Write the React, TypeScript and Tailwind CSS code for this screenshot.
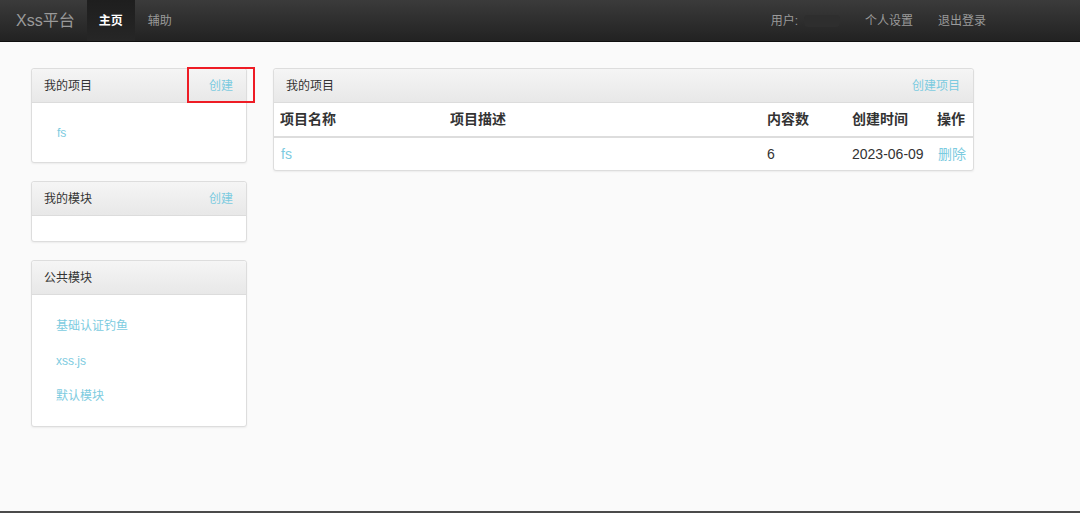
import React from "react";

const font = { fontFamily: '"Liberation Sans", "Noto Sans CJK SC", sans-serif' };

const projects = [{ name: "fs", desc: "", count: 6, date: "2023-06-09" }];
const publicModules = ["基础认证钓鱼", "xss.js", "默认模块"];

function PanelHead({ title, action }: { title: string; action?: string }) {
  return (
    <div className="flex h-[34px] items-center justify-between rounded-t-[3px] border-b border-[#dcdcdc] bg-gradient-to-b from-[#f5f5f5] to-[#e8e8e8] pl-[12px] pr-[13px] text-[12px] text-[#333]">
      <span>{title}</span>
      {action && <a className="text-[12px] text-[#7ccbe0]">{action}</a>}
    </div>
  );
}

export default function App() {
  return (
    <div style={font} className="flex h-[513px] w-[1080px] flex-col overflow-hidden bg-[#fafafa]">
      {/* Navbar */}
      <header className="flex h-[42px] shrink-0 items-stretch border-b border-[#0f0f0f] bg-gradient-to-b from-[#3b3b3b] to-[#222] text-[12px]">
        <span className="flex items-center pl-[16px] pr-[12px] text-[16px] text-[#9a9a9a]">Xss平台</span>
        <span className="flex w-[48px] items-center justify-center bg-gradient-to-b from-[#1e1e1e] to-[#262626] font-bold text-white">主页</span>
        <span className="flex items-center px-[13px] text-[#9a9a9a]">辅助</span>
        <div className="ml-auto flex items-center pr-[94px] text-[#9a9a9a]">
          <span>用户:</span>
          <span className="ml-[6px] h-[12px] w-[36px] rounded-sm bg-[#2e2e2e]" />
          <span className="ml-[25px]">个人设置</span>
          <span className="ml-[25px]">退出登录</span>
        </div>
      </header>

      <main className="flex flex-1 items-start gap-[26px] pl-[31px] pt-[26px]">
        {/* Left column */}
        <div className="flex w-[216px] flex-col gap-[18px]">
          <div className="relative rounded-[3px] border border-[#dddddd] bg-white shadow-[0_1px_2px_rgba(0,0,0,0.06)]">
            <PanelHead title="我的项目" action="创建" />
            <div className="h-[59px] pl-[25px] pt-[21px] text-[12px] text-[#7ccbe0]">fs</div>
            {/* red annotation box */}
            <div className="absolute left-[155px] top-[-2px] h-[36px] w-[68px] border-2 border-[#ee1c25]" />
          </div>

          <div className="rounded-[3px] border border-[#dddddd] bg-white shadow-[0_1px_2px_rgba(0,0,0,0.06)]">
            <PanelHead title="我的模块" action="创建" />
            <div className="h-[25px]" />
          </div>

          <div className="rounded-[3px] border border-[#dddddd] bg-white shadow-[0_1px_2px_rgba(0,0,0,0.06)]">
            <PanelHead title="公共模块" />
            <ul className="flex flex-col gap-[21px] pb-[23px] pl-[24px] pt-[24px] text-[12px] text-[#7ccbe0]">
              {publicModules.map((m) => (
                <li key={m} className="h-[14px] leading-[14px]">{m}</li>
              ))}
            </ul>
          </div>
        </div>

        {/* Right panel */}
        <div className="w-[701px] rounded-[3px] border border-[#dddddd] bg-white shadow-[0_1px_2px_rgba(0,0,0,0.06)]">
          <PanelHead title="我的项目" action="创建项目" />
          <table className="w-full border-collapse text-[14px] text-[#333]">
            <thead>
              <tr className="h-[34px] border-b-2 border-[#dddddd] text-left">
                <th className="w-[170px] pl-[6px] font-bold">项目名称</th>
                <th className="w-[317px] pl-[6px] font-bold">项目描述</th>
                <th className="w-[85px] pl-[6px] font-bold">内容数</th>
                <th className="w-[85px] pl-[6px] font-bold">创建时间</th>
                <th className="pl-[6px] font-bold">操作</th>
              </tr>
            </thead>
            <tbody>
              {projects.map((p) => (
                <tr key={p.name} className="h-[33px]">
                  <td className="pl-[7px] text-[#7ccbe0]">{p.name}</td>
                  <td className="pl-[6px]">{p.desc}</td>
                  <td className="pl-[6px]">{p.count}</td>
                  <td className="pl-[6px]">{p.date}</td>
                  <td className="pl-[7px] text-[#7ccbe0]">删除</td>
                </tr>
              ))}
            </tbody>
          </table>
        </div>
      </main>
      <div className="h-[2px] shrink-0 bg-[#4a4a4a]" />
    </div>
  );
}
